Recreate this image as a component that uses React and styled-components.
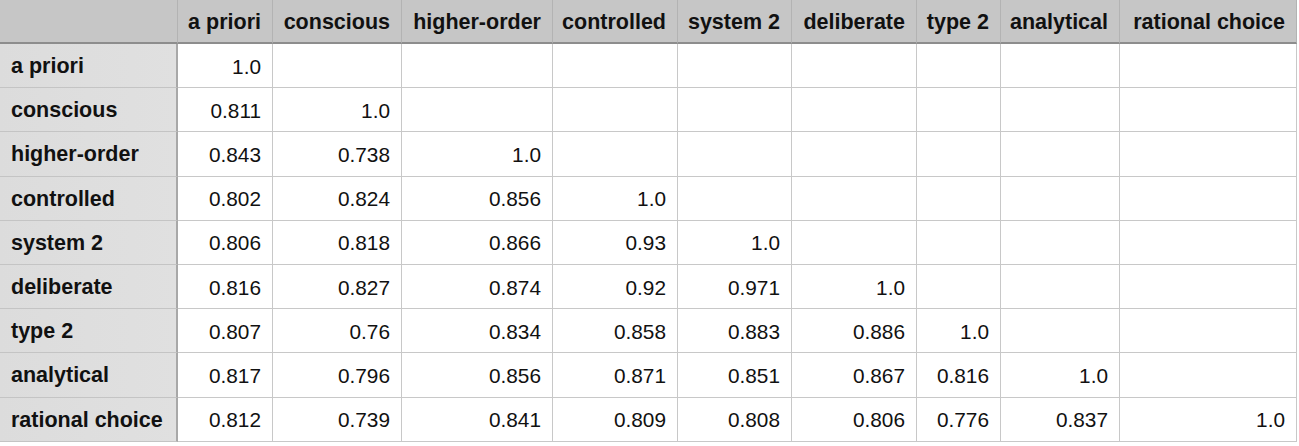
import React from "react"
import styled, { createGlobalStyle } from "styled-components"

const terms = [
  "a priori",
  "conscious",
  "higher-order",
  "controlled",
  "system 2",
  "deliberate",
  "type 2",
  "analytical",
  "rational choice",
]

const values = [
  ["1.0"],
  ["0.811", "1.0"],
  ["0.843", "0.738", "1.0"],
  ["0.802", "0.824", "0.856", "1.0"],
  ["0.806", "0.818", "0.866", "0.93", "1.0"],
  ["0.816", "0.827", "0.874", "0.92", "0.971", "1.0"],
  ["0.807", "0.76", "0.834", "0.858", "0.883", "0.886", "1.0"],
  ["0.817", "0.796", "0.856", "0.871", "0.851", "0.867", "0.816", "1.0"],
  ["0.812", "0.739", "0.841", "0.809", "0.808", "0.806", "0.776", "0.837", "1.0"],
]

const colWidths = [178, 95, 129, 151, 125, 114, 125, 84, 119, 177]

export default function App() {
  return (
    <>
      <GlobalStyle />
      <Grid>
        <Corner />
        {terms.map(t => (
          <HeadCell key={t}>{t}</HeadCell>
        ))}
        {terms.map((t, r) => (
          <React.Fragment key={t}>
            <RowLabel>{t}</RowLabel>
            {terms.map((_, c) => (
              <Cell key={c}>{values[r][c] || ""}</Cell>
            ))}
          </React.Fragment>
        ))}
      </Grid>
    </>
  )
}

const GlobalStyle = createGlobalStyle`
  body {
    margin: 0;
    background: #ffffff;
    font-family: "Liberation Sans", Arial, Helvetica, sans-serif;
    color: #111;
  }
`

const Grid = styled.div`
  display: grid;
  grid-template-columns: ${colWidths.map(w => w + "px").join(" ")};
  grid-template-rows: 44px;
  grid-auto-rows: 44.2px;
  width: 1297px;
`

const Base = styled.div`
  box-sizing: border-box;
  display: flex;
  align-items: center;
  padding-top: 2px;
  white-space: nowrap;
  overflow: hidden;
`

const Corner = styled(Base)`
  background: #c6c6c6;
  border-right: 1px solid #b3b3b3;
  border-bottom: 2px solid #8d8d8d;
`

const HeadCell = styled(Base)`
  justify-content: flex-end;
  padding-left: 8px;
  padding-right: 11px;
  background: #c6c6c6;
  border-right: 1px solid #b3b3b3;
  border-bottom: 2px solid #8d8d8d;
  font-size: 21.5px;
  font-weight: 700;
`

const RowLabel = styled(Base)`
  padding-left: 11px;
  background: linear-gradient(to right, #dcdcdc, #e0e0e0);
  border-right: 2px solid #a8a8a8;
  border-bottom: 1px solid #c4c4c4;
  font-size: 21.5px;
  font-weight: 700;
`

const Cell = styled(Base)`
  justify-content: flex-end;
  padding-right: 11px;
  background: #ffffff;
  border-right: 1px solid #c8c8c8;
  border-bottom: 1px solid #c8c8c8;
  font-size: 20.8px;
`
